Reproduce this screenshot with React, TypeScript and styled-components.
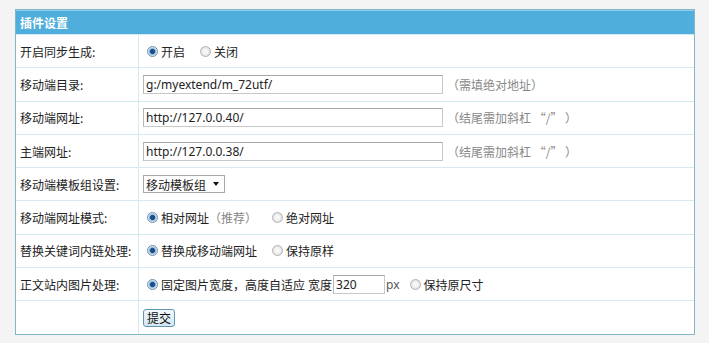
import React from "react";
import styled, { createGlobalStyle } from "styled-components";

const Global = createGlobalStyle`
  html, body { margin: 0; padding: 0; background: #f4f4f4; }
  body { font-family: "Noto Sans CJK SC", "Noto Sans", sans-serif; font-size: 12px; color: #222; }
  * { box-sizing: border-box; }
`;

const Page = styled.div`
  padding: 9px 0 0 15px;
`;

const Panel = styled.div`
  width: 680px;
  background: #fff;
  border: 1px solid #82b7c4;
`;

const Header = styled.div`
  height: 24px;
  display: flex;
  align-items: center;
  padding-left: 4px;
  background: #4faedb;
  border-top: 1px solid #8fcdea;
  color: #fff;
  font-weight: bold;
  font-size: 12px;
`;

const Row = styled.div`
  display: grid;
  grid-template-columns: 123px 1fr;
  height: 33.3px;
  border-top: 1px solid #d5e9f1;
`;

const LabelCell = styled.div`
  display: flex;
  align-items: center;
  padding-left: 4px;
  border-right: 1px solid #d5e9f1;
  color: #222;
`;

const ValueCell = styled.div`
  display: flex;
  align-items: center;
  padding-left: 4px;
`;

const Choice = styled.label<{ $gap?: number }>`
  display: inline-flex;
  align-items: center;
  margin-right: ${(p) => (p.$gap ?? 11)}px;
  cursor: pointer;
`;

const Dot = styled.span<{ $on?: boolean }>`
  width: 11px;
  height: 11px;
  margin: 0 3px 0 4px;
  border-radius: 50%;
  border: 1px solid ${(p) => (p.$on ? "#6c8fa8" : "#b4b4b4")};
  background: ${(p) =>
    p.$on
      ? "radial-gradient(circle, #1e4e86 0 2.2px, #7fb1dc 2.8px, #e4eef6 4.5px)"
      : "radial-gradient(circle, #f7f7f7 0 2px, #dcdcdc 5px)"};
  flex: none;
`;

const Muted = styled.span`
  color: #888;
`;

const TextInput = styled.input<{ $w: number }>`
  width: ${(p) => p.$w}px;
  height: 19px;
  padding: 0 2px;
  border: 1px solid #c8c8c8;
  border-top-color: #a6a6a6;
  border-left-color: #b6b6b6;
  font-family: "Noto Sans", sans-serif;
  font-size: 12px;
  color: #222;
  background: #fff;
  outline: none;
`;

const Hint = styled.span`
  margin-left: 4px;
  color: #888;
`;

const SelectBox = styled.div`
  position: relative;
  width: 82px;
  height: 18px;
  border: 1px solid #a9a9a9;
  background: #fff;
  display: flex;
  align-items: center;
`;

const Select = styled.select`
  appearance: none;
  border: none;
  background: transparent;
  width: 100%;
  height: 100%;
  padding: 0 0 0 2px;
  font-family: "Noto Sans CJK SC", sans-serif;
  font-size: 12px;
  color: #222;
  outline: none;
`;

const Arrow = styled.span`
  position: absolute;
  right: 5px;
  top: 6px;
  width: 0;
  height: 0;
  border-left: 3.5px solid transparent;
  border-right: 3.5px solid transparent;
  border-top: 4px solid #111;
  pointer-events: none;
`;

const Inline = styled.span`
  margin-right: 1px;
`;

const Unit = styled.span`
  margin: 0 6px 0 1px;
  font-family: "Noto Sans", sans-serif;
  color: #555;
`;

const Submit = styled.button`
  height: 18px;
  width: 32px;
  padding: 0;
  border: 1px solid #5f95b5;
  border-radius: 3px;
  background: linear-gradient(#f4f9fc, #d3e6f1);
  font-family: "Noto Sans CJK SC", sans-serif;
  font-size: 12px;
  color: #111;
  line-height: 16px;
`;

type Opt = { text: React.ReactNode; on?: boolean };

const Radios = ({ opts }: { opts: Opt[] }) => (
  <>
    {opts.map((o, i) => (
      <Choice key={i}>
        <Dot $on={o.on} />
        {o.text}
      </Choice>
    ))}
  </>
);

export default function App() {
  return (
    <Page>
      <Global />
      <Panel>
        <Header>插件设置</Header>
        <Row>
          <LabelCell>开启同步生成:</LabelCell>
          <ValueCell>
            <Radios opts={[{ text: "开启", on: true }, { text: "关闭" }]} />
          </ValueCell>
        </Row>
        <Row>
          <LabelCell>移动端目录:</LabelCell>
          <ValueCell>
            <TextInput $w={300} defaultValue="g:/myextend/m_72utf/" />
            <Hint>（需填绝对地址）</Hint>
          </ValueCell>
        </Row>
        <Row>
          <LabelCell>移动端网址:</LabelCell>
          <ValueCell>
            <TextInput $w={300} defaultValue="http://127.0.0.40/" />
            <Hint>（结尾需加斜杠 “/” ）</Hint>
          </ValueCell>
        </Row>
        <Row>
          <LabelCell>主端网址:</LabelCell>
          <ValueCell>
            <TextInput $w={300} defaultValue="http://127.0.0.38/" />
            <Hint>（结尾需加斜杠 “/” ）</Hint>
          </ValueCell>
        </Row>
        <Row>
          <LabelCell>移动端模板组设置:</LabelCell>
          <ValueCell>
            <SelectBox>
              <Select defaultValue="m">
                <option value="m">移动模板组</option>
              </Select>
              <Arrow />
            </SelectBox>
          </ValueCell>
        </Row>
        <Row>
          <LabelCell>移动端网址模式:</LabelCell>
          <ValueCell>
            <Radios
              opts={[
                {
                  text: (
                    <>
                      相对网址<Muted>（推荐）</Muted>
                    </>
                  ),
                  on: true,
                },
                { text: "绝对网址" },
              ]}
            />
          </ValueCell>
        </Row>
        <Row>
          <LabelCell>替换关键词内链处理:</LabelCell>
          <ValueCell>
            <Radios opts={[{ text: "替换成移动端网址", on: true }, { text: "保持原样" }]} />
          </ValueCell>
        </Row>
        <Row>
          <LabelCell>正文站内图片处理:</LabelCell>
          <ValueCell>
            <Choice $gap={3}>
              <Dot $on />
              固定图片宽度，高度自适应
            </Choice>
            <Inline>宽度</Inline>
            <TextInput $w={52} defaultValue="320" />
            <Unit>px</Unit>
            <Choice>
              <Dot />
              保持原尺寸
            </Choice>
          </ValueCell>
        </Row>
        <Row>
          <LabelCell />
          <ValueCell>
            <Submit type="button">提交</Submit>
          </ValueCell>
        </Row>
      </Panel>
    </Page>
  );
}
